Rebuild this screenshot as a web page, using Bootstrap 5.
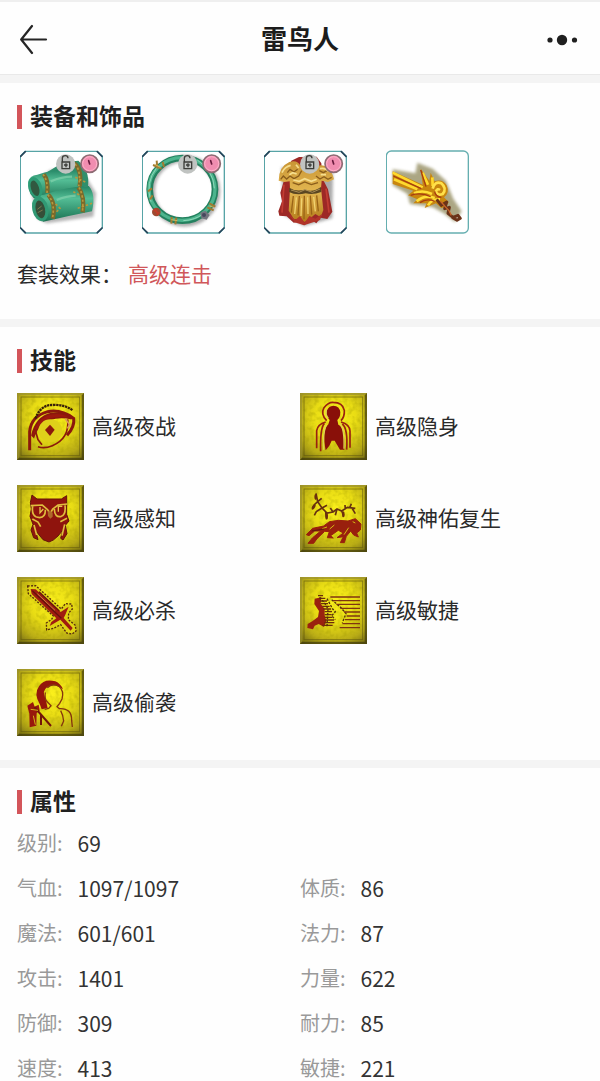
<!DOCTYPE html>
<html lang="zh-CN">
<head>
<meta charset="utf-8">
<meta name="viewport" content="width=device-width, initial-scale=1">
<title>雷鸟人</title>
<link href="https://cdn.jsdelivr.net/npm/bootstrap@5.3.0/dist/css/bootstrap.min.css" rel="stylesheet">
<style>
  body { font-family: "Noto Sans CJK SC", sans-serif; font-size: 21px; line-height: 22px; color: #2a2a2a; background: #fefefe; }
  .topbar { height: 74px; padding: 0 20px; border-top: 2px solid #efefef; }
  .topbar h1 { font-size: 26px; line-height: 36px; font-weight: 700; color: #1c1c1c; }
  .topbar button { width: 36px; height: 36px; line-height: 0; }
  .band { height: 8px; background: #f4f4f4; }
  .band-top { height: 9px; border-top: 1px solid #e9e9e9; }
  .panel { padding: 22px 17px 0; }
  .panel-title { font-size: 23px; line-height: 20px; height: 24px; font-weight: 700; color: #202020; border-left: 5px solid #d3555a; padding-left: 8px; margin-bottom: 20px; }
  .gear { gap: 38px; padding: 1px 3px 0; margin-bottom: 28px; }
  .gear svg { width: 84px; height: 84px; display: block; }
  .suit { gap: 6px; padding-bottom: 35px; }
  .suit a { color: #d0575a; }
  .skills { row-gap: 25px; padding-bottom: 24px; }
  .skills svg { width: 67px; height: 67px; flex: none; }
  .skills span { padding-bottom: 4px; }
  .stats-title { margin-bottom: 18px; }
  .stats { row-gap: 23px; }
  .stats dl { gap: 15px; }
  .stats dt { font-size: 20px; font-weight: 400; color: #999; }
  .stats dd { color: #333; }
</style>
</head>
<body>

<svg width="0" height="0" class="position-absolute" aria-hidden="true">
  <defs>
    <radialGradient id="gold" cx=".52" cy=".38" r=".78">
      <stop offset="0" stop-color="#fbf01c"/><stop offset=".4" stop-color="#e9dd14"/>
      <stop offset=".75" stop-color="#b8ab16"/><stop offset="1" stop-color="#6c6414"/>
    </radialGradient>
    <linearGradient id="jade" x1="0" y1="0" x2="0" y2="1">
      <stop offset="0" stop-color="#258564"/><stop offset=".35" stop-color="#53bd95"/><stop offset="1" stop-color="#1b7152"/>
    </linearGradient>
    <linearGradient id="robe" x1="0" y1="0" x2="0" y2="1">
      <stop offset="0" stop-color="#c99535"/><stop offset=".5" stop-color="#e2b650"/><stop offset="1" stop-color="#b37a1a"/>
    </linearGradient>
    <filter id="grain" x="0" y="0" width="1" height="1">
      <feTurbulence type="fractalNoise" baseFrequency=".07" numOctaves="2" seed="4"/>
      <feColorMatrix values="0 0 0 0 .3  0 0 0 0 .27  0 0 0 0 0  .8 0 0 0 -.34"/>
    </filter>
    <filter id="shade" x="-.2" y="-.2" width="1.4" height="1.4"><feGaussianBlur stdDeviation="5"/></filter>
    <symbol id="tile" viewBox="0 0 201 201">
      <rect width="201" height="201" fill="url(#gold)"/>
      <rect width="201" height="201" filter="url(#grain)"/>
      <path d="M0 0H201L192 7H7V192L0 201Z" fill="#9a9030" opacity=".7"/>
      <path d="M201 0V201H0L7 194H194V7Z" fill="#3e390c" opacity=".7"/>
      <rect x="12" y="12" width="176" height="176" fill="none" stroke="#5a520f" stroke-width="3" opacity=".6"/>
    </symbol>
    <symbol id="frame" viewBox="30 30 252 252">
      <path d="M45 34H262L277 49V264L262 279H45L31 264V49Z" fill="#fff" stroke="#57a4a6" stroke-width="4"/>
      <path d="M32 49L46 35M262 35L276 49M32 264L46 278M276 264L262 278" stroke="#26455a" stroke-width="5" stroke-linecap="round"/>
    </symbol>
    <symbol id="marks" viewBox="30 30 252 252">
      <circle cx="167" cy="72" r="29" fill="#c0c3c1"/>
      <path d="M157 68V55Q157 47 166 47Q174 47 174 55M156 66H179V86H156ZM156 66V86M162 75H173M168 70V82" fill="none" stroke="#3d3e3a" stroke-width="4"/>
      <circle cx="239" cy="71" r="26" fill="#f08db0" stroke="#8d6c74" stroke-width="5"/>
      <circle cx="239" cy="71" r="21" fill="none" stroke="#ffb3ca" stroke-width="3"/>
      <path d="M239 72L236 62" stroke="#6a1c3e" stroke-width="5" stroke-linecap="round"/>
    </symbol>
  </defs>
</svg>

<header class="topbar d-flex align-items-center justify-content-between">
  <button type="button" class="btn p-0 border-0 text-start" aria-label="返回">
    <svg width="28" height="36" viewBox="0 0 28 36" fill="none" stroke="#252525" stroke-width="2.2" stroke-linecap="round" stroke-linejoin="round"><path d="M12 6L1.200 19.500L12 33M1.200 19.500H26"/></svg>
  </button>
  <h1 class="m-0">雷鸟人</h1>
  <button type="button" class="btn p-0 border-0 text-end" aria-label="更多">
    <svg width="34" height="16" viewBox="0 0 34 16" fill="#202020"><circle cx="4" cy="10" r="2.600"/><circle cx="16" cy="10" r="5.200"/><circle cx="28.500" cy="10" r="2.600"/></svg>
  </button>
</header>
<div class="band band-top"></div>

<main>
  <section class="panel">
    <h2 class="panel-title">装备和饰品</h2>
    <div class="gear d-flex">
      <svg viewBox="30 30 252 252" role="img" aria-label="护腕">
        <use href="#frame" x="30" y="30" width="252" height="252"/>
        <path d="M62 145L82 235L110 250L250 230L258 160L210 80L120 90Z" fill="#777" opacity=".55" filter="url(#shade)"/>
        <path d="M112 96Q160 62 205 62Q240 92 234 138L150 155L112 130Z" fill="#2f8f6c"/>
        <path d="M54 128Q58 106 82 104Q145 82 198 92Q215 120 200 150L82 180Q54 168 54 128Z" fill="url(#jade)"/>
        <path d="M66 190Q72 164 102 164Q170 140 236 138Q258 160 246 214Q170 229 100 245Q66 232 66 190Z" fill="url(#jade)"/>
        <ellipse cx="76" cy="143" rx="20" ry="33" fill="#2e9b75" transform="rotate(-18 76 143)"/><ellipse cx="75" cy="145" rx="12" ry="24" fill="#315840" transform="rotate(-18 75 145)"/>
        <ellipse cx="91" cy="207" rx="24" ry="37" fill="#319974" transform="rotate(-12 91 207)"/><ellipse cx="91" cy="208" rx="14" ry="27" fill="#354e38" transform="rotate(-12 91 208)"/>
        <path d="M82 208L95 198M83 218L98 210" stroke="#7d7950" stroke-width="3"/>
        <g fill="none" stroke="#7a6a2c" stroke-width="13"><path d="M101 103Q116 120 112 159"/><path d="M115 164Q139 190 128 236"/><path d="M192 70Q217 88 209 139"/><path d="M205 142Q225 170 218 217"/></g>
        <g fill="none" stroke="#b8973c" stroke-width="5" stroke-dasharray="7 6"><path d="M99 103Q114 120 111 159"/><path d="M113 164Q137 190 127 236M137 192L150 205L137 218"/><path d="M195 72Q214 92 206 139M207 142Q223 170 217 217M190 155L210 166M203 205L246 190M196 112L230 128"/></g>
        <path d="M122 124Q155 110 186 110M140 180Q170 168 197 167" stroke="#83d1ad" stroke-width="7" fill="none" opacity=".7"/>
        <use href="#marks" x="30" y="30" width="252" height="252"/>
      </svg>
      <svg viewBox="30 30 252 252" role="img" aria-label="项圈">
        <use href="#frame" x="30" y="30" width="252" height="252"/>
        <ellipse cx="157" cy="153" rx="98" ry="97" fill="none" stroke="#777" stroke-width="20" opacity=".6" filter="url(#shade)"/>
        <ellipse cx="151" cy="148" rx="98" ry="94" fill="none" stroke="#24815f" stroke-width="20"/>
        <ellipse cx="150" cy="147" rx="99" ry="94" fill="none" stroke="#4cb48d" stroke-width="10"/>
        <path d="M57 185Q38 128 75 82M196 60Q245 93 247 145M154 242Q190 240 213 222" fill="none" stroke="#8ed8b8" stroke-width="3"/>
        <g stroke="#a27b30" stroke-width="6" fill="none"><path d="M63 75L89 86M74 62L76 85M92 66L96 81M48 154L60 145M54 178L62 166M119 231L118 251M133 233L130 253M232 190L250 200M226 202L245 211"/></g>
        <g stroke="#d2b45b" stroke-width="3" fill="none"><path d="M68 73L85 82M118 239L136 242M233 198L245 202"/></g>
        <circle cx="73" cy="216" r="13" fill="#9d4930"/><path d="M63 210L82 220M70 206L77 225" stroke="#c33c28" stroke-width="4"/>
        <path d="M205 218L220 212L233 225L224 239L208 235Z" fill="#72747e"/><circle cx="216" cy="225" r="6" fill="#45465d"/>
        <use href="#marks" x="30" y="30" width="252" height="252"/>
      </svg>
      <svg viewBox="30 30 252 252" role="img" aria-label="铠甲">
        <use href="#frame" x="30" y="30" width="252" height="252"/>
        <path d="M82 82L90 225L150 258L235 235L237 100Z" fill="#666" opacity=".55" filter="url(#shade)"/>
        <path d="M112 62L135 51L188 50L202 70L205 115L222 148L235 215L220 237L200 233L187 250L172 240L151 256L137 245L119 248L98 229L76 227L73 214L84 184L79 158L91 118Z" fill="#9d2926"/>
        <path d="M74 122Q74 80 106 66Q130 58 140 78L158 92L190 77Q228 70 240 118L222 126L203 122L201 145L208 210L200 232L184 222L170 234L152 246L136 236L120 238L104 212L108 147L107 124L91 126Z" fill="url(#robe)"/>
        <g fill="none" stroke="#8a5d1b" stroke-width="4"><path d="M80 118L88 108L98 117L108 108L120 116L134 108L143 92M100 98L108 88L120 96L131 88M186 108L198 117L210 110L222 118L233 112M196 92L208 98L219 92M116 128L134 134L152 126L172 134L192 128"/></g>
        <g fill="none" stroke="#f6de8e" stroke-width="5"><path d="M84 98Q92 80 110 76M106 104L116 98L128 102M126 74L134 84M200 104L216 104M198 86Q214 82 224 94M118 120L136 124L152 116L172 124L188 118"/></g>
        <path d="M106 143Q125 156 152 149Q178 158 201 141L202 156Q178 165 155 160Q126 167 105 156Z" fill="#5a4622"/><path d="M111 150L135 157L153 149L175 157L198 147" fill="none" stroke="#a98d56" stroke-width="3"/>
        <path d="M118 168L112 218M136 168L132 226M151 167L150 238M169 167L173 224M188 166L193 214" fill="none" stroke="#9a6416" stroke-width="4"/>
        <path d="M127 172L122 222M143 175L141 228M161 172L162 222M179 171L184 214" fill="none" stroke="#f1d371" stroke-width="4"/>
        <path d="M104 222L124 240L138 228L152 248L166 228L184 236L204 222L198 240L168 250L150 256L122 247Z" fill="#b1342a"/>
        <path d="M90 134L84 218M216 146L225 218" stroke="#c23d33" stroke-width="5"/>
        <use href="#marks" x="30" y="30" width="252" height="252"/>
      </svg>
      <svg viewBox="30 30 252 252" role="img" aria-label="饰品">
        <rect x="31" y="33" width="246" height="246" rx="15" fill="#fff" stroke="#65aeb0" stroke-width="4"/>
        <path d="M50 88L118 100L124 68L170 86L210 122L232 176L257 214L237 246L203 220L170 202L102 192L94 162L50 136Z" fill="#756c32" opacity=".6" filter="url(#shade)"/>
        <path d="M50 94L140 134L134 86L160 122L164 98L176 124Q200 116 212 136Q222 158 204 172L218 186L210 200L196 204L180 190L146 204L152 190L112 190L124 178L96 166L112 152L50 132Z" fill="#c8860f"/>
        <path d="M50 98L140 142M54 118L124 148M140 98L156 134M169 112L170 138" fill="none" stroke="#ffd92e" stroke-width="8"/>
        <path d="M114 160Q140 148 168 162M122 184Q148 162 176 174M156 196Q168 176 192 178" fill="none" stroke="#ffdf36" stroke-width="8"/>
        <path d="M170 146Q176 122 196 130Q214 146 200 162Q184 168 180 154Q184 144 192 150" fill="none" stroke="#ffe04a" stroke-width="8"/>
        <path d="M52 108L136 146M134 90L150 140M104 166Q136 156 164 170M132 188Q152 174 176 184M176 154Q178 170 196 172" fill="none" stroke="#a83c10" stroke-width="4"/>
        <path d="M182 178L196 196L212 186L206 206L220 202L216 220L231 232L246 226L253 235L243 241L228 232" fill="none" stroke="#6a3218" stroke-width="9" stroke-linejoin="round"/>
        <path d="M194 184L206 198L219 212L226 226" fill="none" stroke="#c8642a" stroke-width="4"/>
      </svg>
    </div>
    <p class="suit d-flex m-0"><span>套装效果：</span><a href="#" class="text-decoration-none">高级连击</a></p>
  </section>
  <div class="band"></div>

  <section class="panel">
    <h2 class="panel-title">技能</h2>
    <div class="skills row row-cols-2 gx-0">
      <div class="col d-flex align-items-center gap-2">
        <svg viewBox="20 26 201 201" aria-hidden="true"><use href="#tile" x="20" y="26" width="201" height="201"/>
          <g fill="none" stroke="#8b180c"><path d="M58 198V142Q62 96 112 82Q152 74 190 102Q194 127 170 153" stroke-width="9"/><path d="M65 153Q77 99 122 88Q160 82 184 103Q150 95 117 105Q83 118 70 158Z" fill="#9d180d" stroke-width="5"/><path d="M75 103Q91 61 127 62Q163 60 187 78" stroke="#39200a" stroke-width="7" stroke-dasharray="7 2"/><path d="M172 105Q178 162 126 184Q102 194 83 187M74 134L83 166L95 181" stroke-width="5"/></g>
          <ellipse cx="120" cy="139" rx="36" ry="34" fill="#dfd01a"/><path d="M119 121L133 136L119 155L104 137Z" fill="#8b180c"/><path d="M165 103L178 121L171 132" stroke="#d99b5c" stroke-width="5" fill="none"/>
        </svg><span>高级夜战</span>
      </div>
      <div class="col d-flex align-items-center gap-2">
        <svg viewBox="24 26 201 201" aria-hidden="true"><use href="#tile" x="24" y="26" width="201" height="201"/>
          <path d="M124 64Q143 65 145 84Q145 99 136 107L139 121Q160 130 157 196H144L136 183L128 169H119L112 184L101 198Q89 139 109 120L113 107Q101 96 104 80Q109 65 124 64Z" fill="#891009"/>
          <g fill="none" stroke="#9a2110" stroke-width="5"><path d="M104 109Q85 90 96 70Q109 53 124 54Q152 54 157 78Q158 98 147 109"/><path d="M101 113Q77 120 74 139V192M97 117Q84 132 86 201M147 113Q173 120 174 140V190M151 119Q168 133 164 196"/></g>
          <path d="M109 102Q98 88 104 74M103 121Q92 143 95 196M144 118Q158 135 156 193" fill="none" stroke="#ddd252" stroke-width="4"/>
        </svg><span>高级隐身</span>
      </div>
      <div class="col d-flex align-items-center gap-2">
        <svg viewBox="20 22 201 201" aria-hidden="true"><use href="#tile" x="20" y="22" width="201" height="201"/>
          <path d="M65 52L80 64H153L169 54V110L176 130L165 143L170 168L158 187L151 182L157 158L143 175L129 187L116 193L98 186L75 158L83 186L70 180L62 157L68 140L59 116L63 94L60 75Z" fill="#8f140d" stroke="#641509" stroke-width="3"/>
          <path d="M61 84L96 82L112 96L119 109L127 94L143 82L171 79M67 86Q62 119 88 120Q106 118 105 96M132 94Q133 121 153 116Q167 111 164 83M66 124L83 133L91 147M150 132L170 122M71 142L79 172M163 140L155 174" fill="none" stroke="#dfbd3d" stroke-width="5"/>
          <path d="M89 88V105L99 94M144 102V85L156 86" fill="none" stroke="#e5c448" stroke-width="4"/><path d="M112 103L119 98L127 105V117L120 123L113 115Z" fill="#af6829"/>
        </svg><span>高级感知</span>
      </div>
      <div class="col d-flex align-items-center gap-2">
        <svg viewBox="24 22 201 201" aria-hidden="true"><use href="#tile" x="24" y="22" width="201" height="201"/>
          <path d="M72 47L77 72L90 91L105 106L123 103L135 94L149 100L166 89L190 92M77 72L67 81L61 91M77 72L89 62M90 91L73 102L67 113M90 91L105 83M101 104L104 125M123 103L115 91M135 94L130 113M149 100L155 115M160 96L159 82M174 89L178 78M179 90L190 108" fill="none" stroke="#653111" stroke-width="5"/>
          <g fill="#6d2f0d"><ellipse cx="71" cy="58" rx="4" ry="9"/><ellipse cx="65" cy="88" rx="4" ry="9" transform="rotate(32 65 88)"/><ellipse cx="104" cy="115" rx="4" ry="10"/><ellipse cx="154" cy="110" rx="4" ry="9"/></g>
          <path d="M43 171L62 152L95 145L112 132L140 128L168 130L190 123L207 139L205 157L194 166L199 178L185 172L176 160L163 176L157 195L145 195L154 177L135 180L154 166L139 158L116 174L124 181L106 180L112 162L98 161L75 183L65 197L48 197L61 181L86 160L68 160L51 174Z" fill="#99200d" stroke="#99200d" stroke-width="3"/>
          <path d="M91 153L105 148M113 154L127 142M156 171L170 150M182 132L190 136" stroke="#d4b912" stroke-width="3"/><path d="M59 160L97 154" stroke="#5d1b0c" stroke-width="3"/>
        </svg><span>高级神佑复生</span>
      </div>
      <div class="col d-flex align-items-center gap-2">
        <svg viewBox="20 297 201 201" aria-hidden="true"><use href="#tile" x="20" y="297" width="201" height="201"/>
          <path d="M52 324L76 323L153 393L165 377L184 378L186 393L175 405L174 425L195 442L197 459L185 468L169 465L151 440L130 451L109 456L108 435L124 424L129 414L54 347Z" fill="#dfd313" stroke="#572a0e" stroke-width="4" stroke-dasharray="6 4"/>
          <path d="M61 333L76 334L151 402L175 386L165 410L160 420L187 450L181 458L150 425L118 444L123 432L138 421L64 348Z" fill="#a01c10"/>
          <path d="M66 338L153 421M86 341L147 399" stroke="#65130b" stroke-width="4"/><path d="M81 347L134 397" stroke="#ca803c" stroke-width="3"/>
        </svg><span>高级必杀</span>
      </div>
      <div class="col d-flex align-items-center gap-2">
        <svg viewBox="24 297 201 201" aria-hidden="true"><use href="#tile" x="24" y="297" width="201" height="201"/>
          <path d="M68 362L88 358L86 377L98 393V412L103 430L96 447L80 438L68 443L63 454L46 450L47 438L62 429L78 417L81 399L67 378Z" fill="#9a210f"/>
          <path d="M78 353H93M81 361H100M84 369H105M86 377H108M91 385H113M94 393H117M98 401H120M98 410H119M98 418H121M98 426H126M96 434H127M91 442H122" stroke="#6d2d0b" stroke-width="4"/>
          <path d="M105 362L122 393L130 401L119 413L130 425M119 365L147 389L162 407L151 434M83 358L99 377L108 393L105 446" fill="none" stroke="#54320a" stroke-width="4" stroke-dasharray="7 4"/>
          <path d="M115 357H204M123 368H204M133 379H204M145 391H204M156 402H204M164 414H204M159 425H204M151 437H204M143 449H204" stroke="#803411" stroke-width="4"/>
        </svg><span>高级敏捷</span>
      </div>
      <div class="col d-flex align-items-center gap-2">
        <svg viewBox="20 26 201 201" aria-hidden="true"><use href="#tile" x="20" y="26" width="201" height="201"/>
          <path d="M89 133Q69 101 86 78Q101 54 135 63Q151 70 158 87Q132 67 111 80Q94 92 105 113L112 143L94 147Z" fill="#94160b"/>
          <path d="M111 82Q126 67 146 78Q162 92 155 116L148 129L140 139L147 145Q185 143 184 181L186 200M105 96Q101 116 112 126L122 136L115 144L103 147M151 151Q158 164 160 182L153 198" fill="none" stroke="#85350d" stroke-width="4"/>
          <path d="M51 136L68 125L73 139L85 133L88 151L79 158L78 196L58 201L57 160Z" fill="#98180c"/><path d="M72 140L122 197M92 165V194" stroke="#731509" stroke-width="6"/><path d="M61 147L83 150M69 166L75 193" stroke="#d3b413" stroke-width="3"/>
        </svg><span>高级偷袭</span>
      </div>
    </div>
  </section>
  <div class="band"></div>

  <section class="panel">
    <h2 class="panel-title stats-title">属性</h2>
    <div class="stats row row-cols-2 gx-0">
      <div class="col-12"><dl class="d-flex m-0"><dt>级别:</dt><dd class="m-0">69</dd></dl></div>
      <div class="col"><dl class="d-flex m-0"><dt>气血:</dt><dd class="m-0">1097/1097</dd></dl></div>
      <div class="col"><dl class="d-flex m-0"><dt>体质:</dt><dd class="m-0">86</dd></dl></div>
      <div class="col"><dl class="d-flex m-0"><dt>魔法:</dt><dd class="m-0">601/601</dd></dl></div>
      <div class="col"><dl class="d-flex m-0"><dt>法力:</dt><dd class="m-0">87</dd></dl></div>
      <div class="col"><dl class="d-flex m-0"><dt>攻击:</dt><dd class="m-0">1401</dd></dl></div>
      <div class="col"><dl class="d-flex m-0"><dt>力量:</dt><dd class="m-0">622</dd></dl></div>
      <div class="col"><dl class="d-flex m-0"><dt>防御:</dt><dd class="m-0">309</dd></dl></div>
      <div class="col"><dl class="d-flex m-0"><dt>耐力:</dt><dd class="m-0">85</dd></dl></div>
      <div class="col"><dl class="d-flex m-0"><dt>速度:</dt><dd class="m-0">413</dd></dl></div>
      <div class="col"><dl class="d-flex m-0"><dt>敏捷:</dt><dd class="m-0">221</dd></dl></div>
    </div>
  </section>
</main>

<script src="https://cdn.jsdelivr.net/npm/bootstrap@5.3.0/dist/js/bootstrap.bundle.min.js"></script>
</body>
</html>
